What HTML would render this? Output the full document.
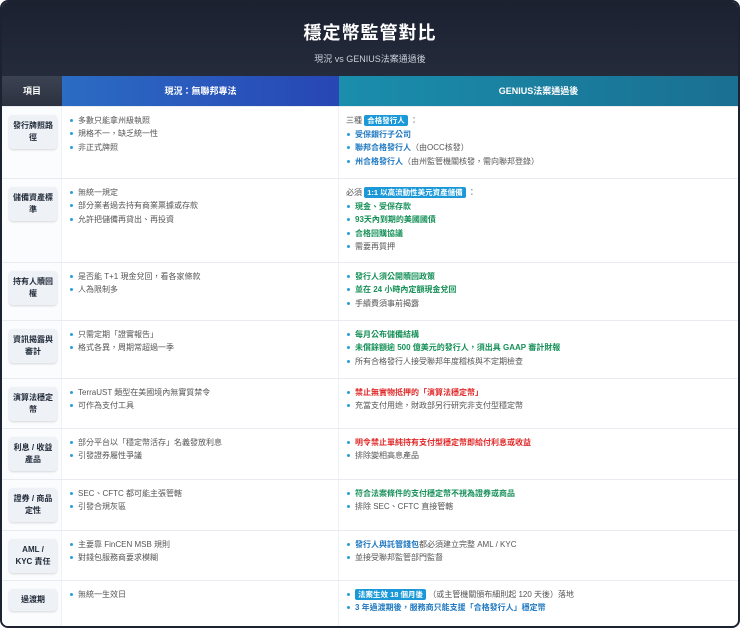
<!DOCTYPE html>
<html><head><meta charset="utf-8"><style>
*{margin:0;padding:0;box-sizing:border-box}
body{width:740px;height:628px;background:#fff;font-family:"Liberation Sans","Noto Sans CJK TC",sans-serif;overflow:hidden;position:relative}
.frame{position:absolute;left:0;top:0;width:740px;height:628px;border:2px solid #1c2230;border-radius:8px;overflow:hidden;background:#fff}
.hdr{position:absolute;left:0;top:0;width:736px;height:74px;background:linear-gradient(180deg,#1b2130,#242b3b)}
.hdr h1{position:absolute;top:17px;width:100%;text-align:center;color:#fff;font-size:18px;font-weight:bold;letter-spacing:1px}
.hdr p{position:absolute;top:50px;width:100%;text-align:center;color:#c9ced8;font-size:9px}
.th{position:absolute;top:74px;height:30px;color:#fff;font-size:9px;font-weight:bold;text-align:center;line-height:30px}
.row{position:absolute;left:0;width:736px;border-top:1px solid #e8ecf1}
.lc{position:absolute;left:0;top:0;bottom:0;width:60px;background:#fbfcfd;border-right:1px solid #eef1f5}
.mc{position:absolute;left:60px;top:0;bottom:0;width:277px;border-right:1px solid #eef1f5}
.rc{position:absolute;left:337px;top:0;bottom:0;right:0}
.lab{position:absolute;left:7px;top:8px;width:48px;background:#eef1f6;border-radius:4px;box-shadow:0 1px 2px rgba(0,0,0,.15);font-size:8px;font-weight:bold;color:#1f2937;text-align:center;line-height:12px;padding:5px 2px}
ul{list-style:none;position:absolute;left:7px;top:7px;font-size:8px;color:#555;line-height:13.3px}
li{padding-left:9px;position:relative;white-space:nowrap}
li:before{content:"";position:absolute;left:1px;top:5px;width:3px;height:3px;border-radius:50%;background:#2a9fd6}
.pre{position:absolute;left:7px;top:7px;font-size:8px;color:#555;line-height:13px}
.b{color:#1f78c0;font-weight:bold}.g{color:#169058;font-weight:bold}.r{color:#e02828;font-weight:bold}
.bd{background:#1a98d8;color:#fff;font-weight:bold;padding:1px 3px;border-radius:2px;font-size:7.5px}
</style></head><body><div class="frame">
<div class="hdr"><h1>穩定幣監管對比</h1><p>現況 vs GENIUS法案通過後</p></div>
<div class="th" style="left:0;width:60px;background:linear-gradient(180deg,#3b4252,#2c3240)">項目</div>
<div class="th" style="left:60px;width:277px;background:linear-gradient(90deg,#2b6cc4,#2846b4)">現況：無聯邦專法</div>
<div class="th" style="left:337px;width:399px;background:linear-gradient(90deg,#1a8eac,#1a6f92)">GENIUS法案通過後</div>

<div class="row" style="top:104px;height:72px"><div class="lc"><div class="lab">發行牌照路徑</div></div>
<div class="mc"><ul><li>多數只能拿州級執照</li><li>規格不一，缺乏統一性</li><li>非正式牌照</li></ul></div>
<div class="rc"><div class="pre">三種 <span class="bd">合格發行人</span> ：</div><ul style="top:21px"><li class="b">受保銀行子公司</li><li><span class="b">聯邦合格發行人</span>（由OCC核發）</li><li><span class="b">州合格發行人</span>（由州監管機關核發，需向聯邦登錄）</li></ul></div></div>

<div class="row" style="top:176px;height:84px"><div class="lc"><div class="lab">儲備資產標準</div></div>
<div class="mc"><ul><li>無統一規定</li><li>部分業者過去持有商業票據或存款</li><li>允許把儲備再貸出、再投資</li></ul></div>
<div class="rc"><div class="pre">必須 <span class="bd">1:1 以高流動性美元資產儲備</span> ：</div><ul style="top:21px"><li class="g">現金、受保存款</li><li class="g">93天內到期的美國國債</li><li class="g">合格回購協議</li><li>需要再質押</li></ul></div></div>

<div class="row" style="top:260px;height:58px"><div class="lc"><div class="lab">持有人贖回權</div></div>
<div class="mc"><ul><li>是否能 T+1 現金兌回，看各家條款</li><li>人為限制多</li></ul></div>
<div class="rc"><ul><li class="g">發行人須公開贖回政策</li><li class="g">並在 24 小時內定額現金兌回</li><li>手續費須事前揭露</li></ul></div></div>

<div class="row" style="top:318px;height:58px"><div class="lc"><div class="lab">資訊揭露與審計</div></div>
<div class="mc"><ul><li>只需定期「證實報告」</li><li>格式各異，周期常超過一季</li></ul></div>
<div class="rc"><ul><li class="g">每月公布儲備結構</li><li class="g">未償餘額逾 500 億美元的發行人，須出具 GAAP 審計財報</li><li>所有合格發行人接受聯邦年度稽核與不定期檢查</li></ul></div></div>

<div class="row" style="top:376px;height:50px"><div class="lc"><div class="lab">演算法穩定幣</div></div>
<div class="mc"><ul><li>TerraUST 類型在美國境內無實質禁令</li><li>可作為支付工具</li></ul></div>
<div class="rc"><ul><li class="r">禁止無實物抵押的「演算法穩定幣」</li><li>充當支付用途，財政部另行研究非支付型穩定幣</li></ul></div></div>

<div class="row" style="top:426px;height:51px"><div class="lc"><div class="lab">利息 / 收益產品</div></div>
<div class="mc"><ul><li>部分平台以「穩定幣活存」名義發放利息</li><li>引發證券屬性爭議</li></ul></div>
<div class="rc"><ul><li class="r">明令禁止單純持有支付型穩定幣即給付利息或收益</li><li>排除變相高息產品</li></ul></div></div>

<div class="row" style="top:477px;height:51px"><div class="lc"><div class="lab">證券 / 商品定性</div></div>
<div class="mc"><ul><li>SEC、CFTC 都可能主張管轄</li><li>引發合規灰區</li></ul></div>
<div class="rc"><ul><li class="g">符合法案條件的支付穩定幣不視為證券或商品</li><li>排除 SEC、CFTC 直接管轄</li></ul></div></div>

<div class="row" style="top:528px;height:50px"><div class="lc"><div class="lab">AML /<br>KYC 責任</div></div>
<div class="mc"><ul><li>主要靠 FinCEN MSB 規則</li><li>對錢包服務商要求模糊</li></ul></div>
<div class="rc"><ul><li><span class="b">發行人與託管錢包</span>都必須建立完整 AML / KYC</li><li>並接受聯邦監管部門監督</li></ul></div></div>

<div class="row" style="top:578px;height:50px"><div class="lc"><div class="lab" style="padding:5px 2px">過渡期</div></div>
<div class="mc"><ul><li>無統一生效日</li></ul></div>
<div class="rc"><ul><li><span class="bd">法案生效 18 個月後</span> （或主管機關頒布細則起 120 天後）落地</li><li class="b">3 年過渡期後，服務商只能支援「合格發行人」穩定幣</li></ul></div></div>
</div></body></html>
